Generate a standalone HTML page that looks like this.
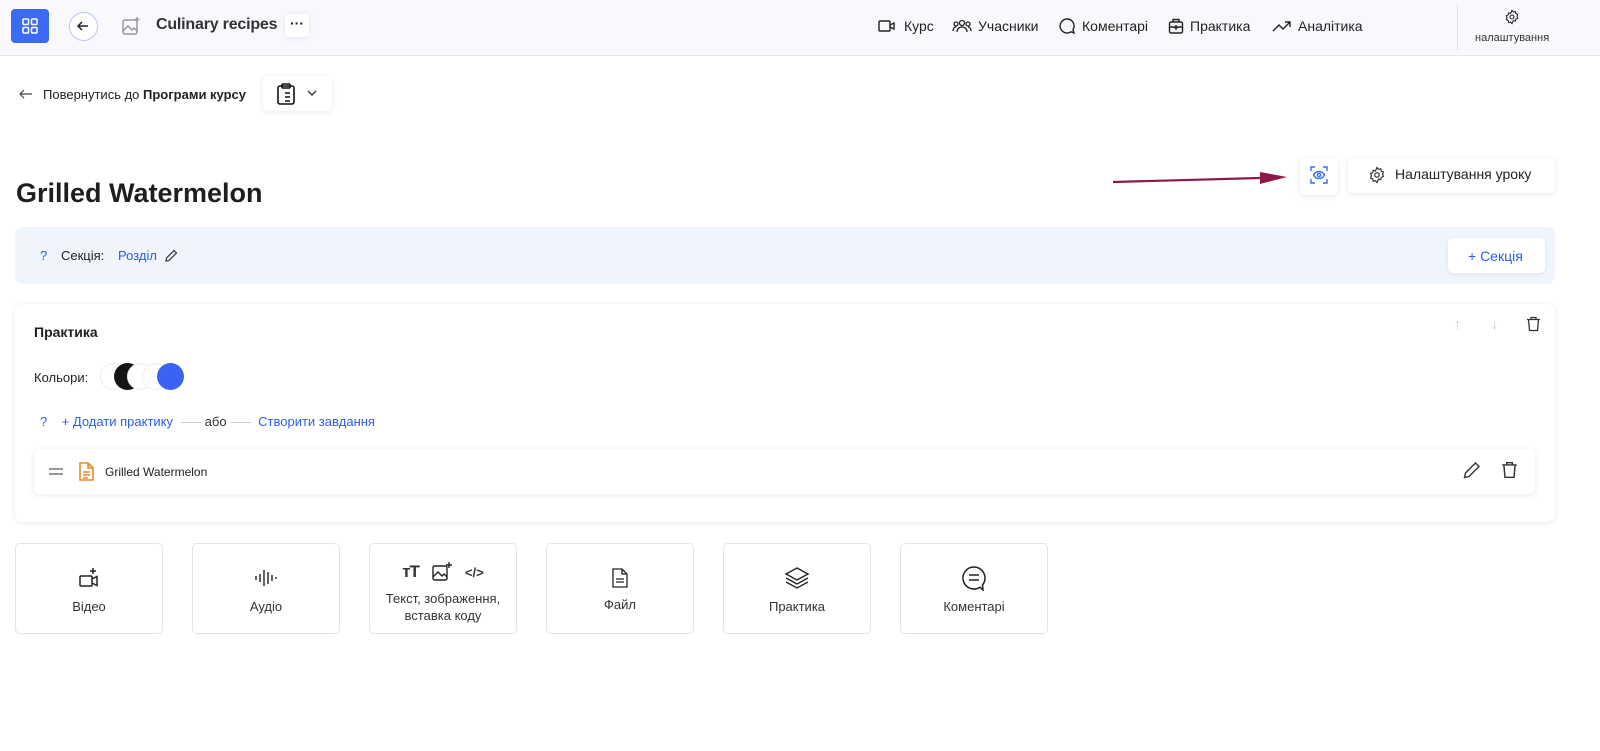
<!DOCTYPE html>
<html><head><meta charset="utf-8"><style>
*{box-sizing:border-box;margin:0;padding:0}
body{width:1600px;height:751px;background:#fff;font-family:"Liberation Sans",sans-serif;color:#1e1e1e;position:relative;overflow:hidden}
.a{position:absolute}
.hdr{left:0;top:0;width:1600px;height:56px;background:#f9f9fd;border-bottom:1px solid #e6e6ee}
.nav{top:18px;font-size:14px;color:#222;display:flex;align-items:center;gap:6px}
.card{background:#fff;border-radius:8px;box-shadow:0 1px 6px rgba(30,40,80,.1)}
.tile{top:543px;width:148px;height:91px;border:1px solid #e3e3ea;border-radius:5px;background:#fff;font-size:13px;color:#333;text-align:center}
.blue{color:#2b5cf0}
svg{display:block}
</style></head><body>
<div class="a hdr"></div>
<div class="a" style="left:11px;top:9px;width:38px;height:34px;background:#3b6af5;border-radius:4px"></div>
<svg class="a" style="left:22px;top:18px" width="16" height="16" viewBox="0 0 16 16" fill="none" stroke="#fff" stroke-width="1.5"><rect x="1" y="1" width="5.5" height="5.5" rx="1"/><rect x="9.5" y="1" width="5.5" height="5.5" rx="1"/><rect x="1" y="9.5" width="5.5" height="5.5" rx="1"/><rect x="9.5" y="9.5" width="5.5" height="5.5" rx="1"/></svg>
<div class="a" style="left:69px;top:12px;width:29px;height:29px;border-radius:50%;border:1px solid #b9c7f5;background:#fff"></div>
<svg class="a" style="left:76px;top:19px" width="14" height="14" viewBox="0 0 14 14" fill="none" stroke="#222" stroke-width="1.5"><path d="M12 7H2M6 3L2 7l4 4"/></svg>
<svg class="a" style="left:121px;top:16px" width="20" height="20" viewBox="0 0 20 20" fill="none" stroke="#999" stroke-width="1.5"><rect x="2" y="4" width="14" height="14" rx="2"/><path d="M2 15l5-5 4 4 2-2 3 3M16 1v5M13.5 3.5h5"/></svg>
<div class="a" style="left:156px;top:16px;font-size:16px;font-weight:bold;color:#333;letter-spacing:-0.2px">Culinary recipes</div>
<div class="a card" style="left:285px;top:14px;width:24px;height:23px;border-radius:4px;text-align:center;font-size:14px;line-height:18px;font-weight:bold">···</div>

<div class="a nav" style="left:878px"><svg width="18" height="14" viewBox="0 0 18 14" fill="none" stroke="#222" stroke-width="1.4"><rect x="1" y="2" width="11" height="10" rx="1"/><path d="M12 6l4-2v6l-4-2"/></svg><span style="margin-left:2px">Курс</span></div>
<div class="a nav" style="left:952px"><svg width="20" height="14" viewBox="0 0 20 14" fill="none" stroke="#222" stroke-width="1.3"><circle cx="10" cy="4" r="2.5"/><circle cx="4" cy="5" r="2"/><circle cx="16" cy="5" r="2"/><path d="M5 13c0-3 2-5 5-5s5 2 5 5M1 12c0-2 1-4 3-4M19 12c0-2-1-4-3-4"/></svg><span>Учасники</span></div>
<div class="a nav" style="left:1058px"><svg width="18" height="16" viewBox="0 0 18 16" fill="none" stroke="#222" stroke-width="1.4"><path d="M9 1a7 7 0 1 0 4 12.8L16 15l-1-3.3A7 7 0 0 0 9 1z"/><path d="M6 8h.1M9 8h.1M12 8h.1"/></svg><span>Коментарі</span></div>
<div class="a nav" style="left:1168px"><svg width="16" height="16" viewBox="0 0 16 16" fill="none" stroke="#222" stroke-width="1.4"><rect x="1.5" y="4" width="13" height="11" rx="1.5"/><path d="M5 4V1.5h6V4M8 7v5M5.5 9.5h5M1.5 9h13"/></svg><span>Практика</span></div>
<div class="a nav" style="left:1272px"><svg width="20" height="14" viewBox="0 0 20 14" fill="none" stroke="#222" stroke-width="1.4"><path d="M1 12l6-6 4 4 7-7M13 3h5v5"/></svg><span>Аналітика</span></div>
<div class="a" style="left:1457px;top:4px;width:1px;height:46px;background:#e2e2ea"></div>
<svg class="a" style="left:1504px;top:9px" width="16" height="16" viewBox="0 0 24 24" fill="none" stroke="#222" stroke-width="1.6"><circle cx="12" cy="12" r="3"/><path d="M12 2l2 2.5 3-.7.7 3L20.5 8l-1 3 1 3-2.8 1.2-.7 3-3-.7L12 22l-2-2.5-3 .7-.7-3L3.5 16l1-3-1-3 2.8-1.2.7-3 3 .7z"/></svg>
<div class="a" style="left:1475px;top:32px;font-size:11px;color:#333">налаштування</div>

<svg class="a" style="left:19px;top:88px" width="14" height="12" viewBox="0 0 14 12" fill="none" stroke="#444" stroke-width="1.2"><path d="M13 6H1M5 2L1 6l4 4"/></svg>
<div class="a" style="left:43px;top:87px;font-size:13px;color:#222">Повернутись до <b>Програми курсу</b></div>
<div class="a card" style="left:263px;top:76px;width:69px;height:35px;border-radius:5px"></div>
<svg class="a" style="left:276px;top:83px" width="20" height="22" viewBox="0 0 20 22" fill="none" stroke="#111" stroke-width="1.6"><rect x="2" y="3" width="16" height="18" rx="2"/><rect x="6" y="1" width="8" height="4" rx="1"/><path d="M6 10h.1M9 10h5M6 14h.1M9 14h5M6 18h.1M9 18h5"/></svg>
<svg class="a" style="left:307px;top:90px" width="10" height="7" viewBox="0 0 10 7" fill="none" stroke="#333" stroke-width="1.4"><path d="M1 1l4 4 4-4"/></svg>

<div class="a" style="left:16px;top:178px;font-size:27px;font-weight:bold;color:#1e1e1e">Grilled Watermelon</div>
<svg class="a" style="left:1110px;top:168px" width="180" height="20" viewBox="0 0 180 20"><path d="M3 14L150 10" stroke="#8b1a4a" stroke-width="2.2"/><path d="M150 4L177 9L150 16z" fill="#8b1a4a"/></svg>
<div class="a card" style="left:1300px;top:158px;width:38px;height:37px;border-radius:5px"></div>
<svg class="a" style="left:1310px;top:166px" width="18" height="18" viewBox="0 0 18 18" fill="none" stroke="#3b6af5" stroke-width="1.4"><path d="M1 5V1h4M13 1h4v4M17 13v4h-4M5 17H1v-4"/><path d="M3.5 9C5 6.5 7 5.5 9 5.5s4 1 5.5 3.5C13 11.5 11 12.5 9 12.5S5 11.5 3.5 9z"/><circle cx="9" cy="9" r="1.6"/></svg>
<div class="a card" style="left:1348px;top:158px;width:207px;height:35px;border-radius:5px"></div>
<svg class="a" style="left:1368px;top:166px" width="18" height="18" viewBox="0 0 24 24" fill="none" stroke="#333" stroke-width="1.6"><circle cx="12" cy="12" r="3"/><path d="M12 2l2 2.5 3-.7.7 3L20.5 8l-1 3 1 3-2.8 1.2-.7 3-3-.7L12 22l-2-2.5-3 .7-.7-3L3.5 16l1-3-1-3 2.8-1.2.7-3 3 .7z"/></svg>
<div class="a" style="left:1395px;top:166px;font-size:14px;color:#222">Налаштування уроку</div>

<div class="a" style="left:15px;top:227px;width:1540px;height:57px;background:#eff4fd;border-radius:8px"></div>
<div class="a blue" style="left:40px;top:248px;font-size:13px">?</div>
<div class="a" style="left:61px;top:248px;font-size:13px;color:#222">Секція:</div>
<div class="a blue" style="left:118px;top:248px;font-size:13px">Розділ</div>
<svg class="a" style="left:165px;top:249px" width="13" height="13" viewBox="0 0 13 13" fill="none" stroke="#333" stroke-width="1.2"><path d="M9 1.5l2.5 2.5L4 11.5 1 12l.5-3z"/></svg>
<div class="a card" style="left:1448px;top:238px;width:97px;height:35px;border-radius:5px;box-shadow:0 1px 4px rgba(30,40,80,.08)"></div>
<div class="a blue" style="left:1468px;top:248px;font-size:14px">+ Секція</div>

<div class="a card" style="left:15px;top:304px;width:1540px;height:218px"></div>
<div class="a" style="left:34px;top:324px;font-size:14px;font-weight:bold;color:#1e1e1e">Практика</div>
<div class="a" style="left:1454px;top:316px;color:#c8c8d0;font-size:14px">↑</div>
<div class="a" style="left:1491px;top:316px;color:#c8c8d0;font-size:14px">↓</div>
<svg class="a" style="left:1526px;top:316px" width="15" height="16" viewBox="0 0 15 16" fill="none" stroke="#333" stroke-width="1.3"><path d="M1 3.5h13M5 3.5V1.5h5v2M2.5 3.5l1 11h8l1-11"/></svg>
<div class="a" style="left:34px;top:370px;font-size:13px;color:#222">Кольори:</div>
<div class="a" style="left:100px;top:363px;width:27px;height:27px;border-radius:50%;border:1px solid #eee;background:#fff"></div>
<div class="a" style="left:114px;top:363px;width:27px;height:27px;border-radius:50%;background:#151515"></div>
<div class="a" style="left:127px;top:363px;width:27px;height:27px;border-radius:50%;background:#fff;border:1px solid #eee"></div>
<div class="a" style="left:142px;top:363px;width:27px;height:27px;border-radius:50%;background:#fff;border:1px solid #eee"></div>
<div class="a" style="left:157px;top:363px;width:27px;height:27px;border-radius:50%;background:#3a63f3"></div>
<div class="a" style="left:40px;top:414px;font-size:13px;color:#2b5cf0;white-space:nowrap">?&nbsp;&nbsp;&nbsp;&nbsp;+ Додати практику <span style="display:inline-block;width:20px;height:1px;background:#ccc;vertical-align:middle;margin:0 4px"></span><span style="color:#333">або</span><span style="display:inline-block;width:20px;height:1px;background:#ccc;vertical-align:middle;margin:0 4px"></span> Створити завдання</div>

<div class="a card" style="left:34px;top:449px;width:1501px;height:45px;border-radius:5px"></div>
<div class="a" style="left:49px;top:468px;width:14px;height:1.5px;background:#999"></div>
<div class="a" style="left:49px;top:473px;width:14px;height:1.5px;background:#999"></div>
<svg class="a" style="left:79px;top:462px" width="15" height="19" viewBox="0 0 15 19" fill="none" stroke="#f08a24" stroke-width="1.6"><path d="M1 1h8l5 5v12H1z M9 1v5h5M4 10h7M4 13h7M4 16h5"/></svg>
<div class="a" style="left:105px;top:465px;font-size:12px;color:#222">Grilled Watermelon</div>
<svg class="a" style="left:1463px;top:461px" width="18" height="18" viewBox="0 0 18 18" fill="none" stroke="#333" stroke-width="1.4"><path d="M12.5 2l3.5 3.5L6 15.5 1.5 16.5l1-4.5z"/></svg>
<svg class="a" style="left:1501px;top:461px" width="17" height="18" viewBox="0 0 15 16" fill="none" stroke="#333" stroke-width="1.3"><path d="M1 3.5h13M5 3.5V1.5h5v2M2.5 3.5l1 11h8l1-11"/></svg>

<div class="a tile" style="left:15px"><svg style="margin:22px auto 0" width="24" height="24" viewBox="0 0 24 24" fill="none" stroke="#222" stroke-width="1.5"><rect x="3" y="10" width="12" height="10" rx="1"/><path d="M15 13l5-2.5v9L15 17M16 2v6M13 5h6"/></svg><div style="margin-top:9px">Відео</div></div>
<div class="a tile" style="left:192px"><svg style="margin:22px auto 0" width="26" height="24" viewBox="0 0 26 24" fill="none" stroke="#222" stroke-width="1.4"><path d="M3 10v4M7 8v8M11 4v16M15 6v12M19 9v6M23 11v2"/></svg><div style="margin-top:9px">Аудіо</div></div>
<div class="a tile" style="left:369px"><div style="display:flex;justify-content:center;gap:12px;margin-top:17px;align-items:center"><span style="font-size:17px;font-weight:bold;letter-spacing:-1px">тТ</span><svg width="22" height="22" viewBox="0 0 22 22" fill="none" stroke="#222" stroke-width="1.4"><rect x="2" y="5" width="14" height="14" rx="1.5"/><path d="M2 16l5-5 4 4 2-2 3 3M18 1v6M15 4h6"/></svg><span style="font-size:13px;font-weight:bold">&lt;/&gt;</span></div><div style="margin-top:7px;line-height:17px">Текст, зображення,<br>вставка коду</div></div>
<div class="a tile" style="left:546px"><svg style="margin:24px auto 0" width="16" height="20" viewBox="0 0 16 20" fill="none" stroke="#222" stroke-width="1.3"><path d="M1 1h9l5 5v13H1z M10 1v5h5M4 11h8M4 14h8"/></svg><div style="margin-top:9px">Файл</div></div>
<div class="a tile" style="left:723px"><svg style="margin:22px auto 0" width="26" height="24" viewBox="0 0 26 24" fill="none" stroke="#222" stroke-width="1.4"><path d="M13 2l11 6-11 6L2 8z M2 12l11 6 11-6M2 16l11 6 11-6"/></svg><div style="margin-top:9px">Практика</div></div>
<div class="a tile" style="left:900px"><svg style="margin:21px auto 0" width="26" height="26" viewBox="0 0 26 26" fill="none" stroke="#222" stroke-width="1.5"><path d="M13 2a11 11 0 1 0 6 20.2L22 25l-.5-5A11 11 0 0 0 13 2z"/><path d="M8 10h10M8 15h10"/></svg><div style="margin-top:8px">Коментарі</div></div>
</body></html>
